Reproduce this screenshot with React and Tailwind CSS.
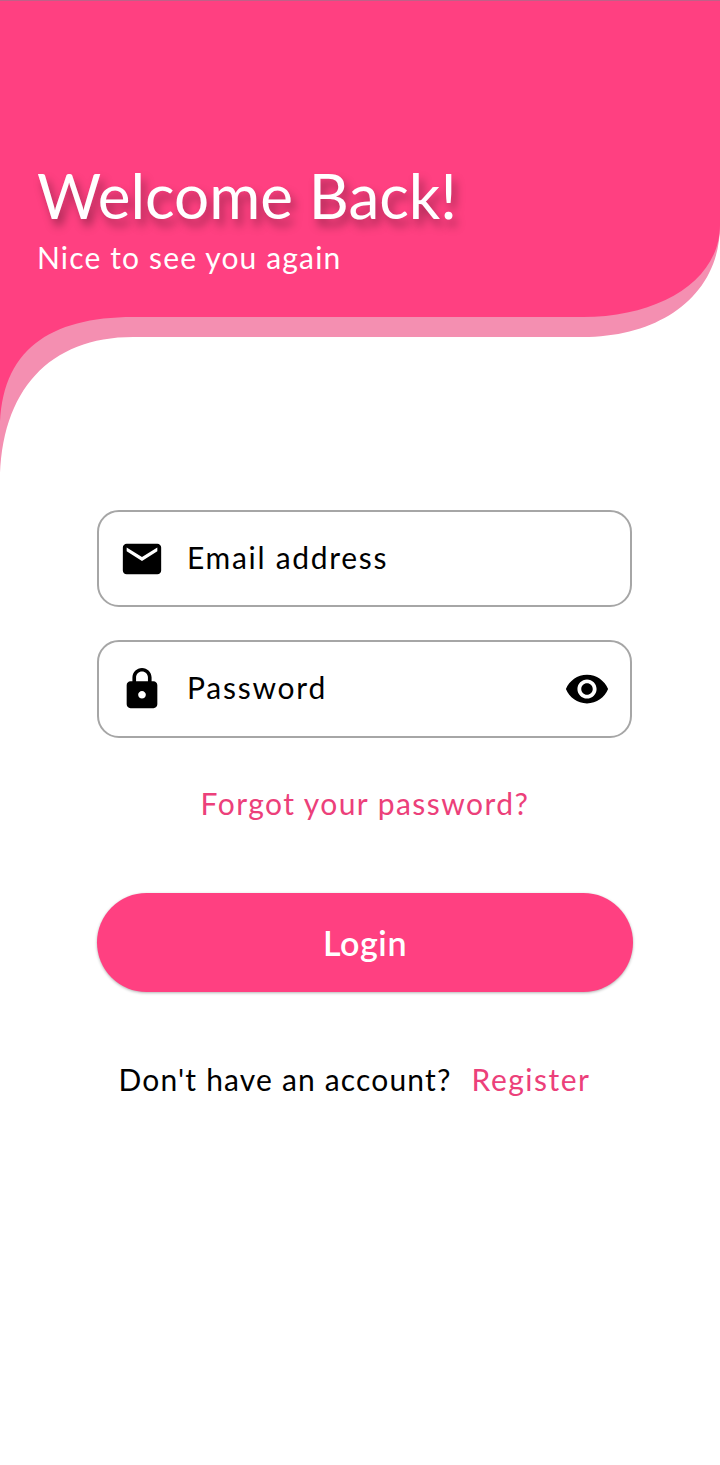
import React from 'react';
import { MdEmail, MdLock, MdVisibility } from 'react-icons/md';

// header wave: the light layer is the main shape pushed 20px down
function Wave() {
  return (
    <svg className="absolute left-0 top-0" width="720" height="500" viewBox="0 0 720 500">
      <path d="M0 0H720V225C720 296 660 337 583 337H133C50 337 0 390 0 483Z" fill="#F48FB1" />
      <path d="M0 0H720V225C720 280 660 317 583 317H133C50 317 0 350 0 430Z" fill="#FF4081" />
    </svg>
  );
}

function Field({ icon, label, boxClass, labelClass, right }) {
  return (
    <div className={`flex items-center border-2 border-[#a6a6a6] rounded-[22px] pl-[20px] pr-[20px] ${boxClass}`}>
      <span className="w-[46px] flex justify-center text-black">{icon}</span>
      <span className={`ml-[22px] pb-[3px] flex-1 text-[30px] text-black ${labelClass}`}>{label}</span>
      {right}
    </div>
  );
}

export default function App() {
  return (
    <div className="w-[720px] h-[1465px] bg-white overflow-hidden font-['Lato','Noto_Sans',sans-serif]">
      <header className="relative h-[510px]">
        <Wave />
        <div className="absolute left-0 top-0 w-full h-px bg-[#c06088]" />
        <div className="relative pt-[157px] pl-[37px] text-white">
          <h1 className="text-[62px] leading-[76px] font-normal [text-shadow:4px_7px_10px_rgba(0,0,0,0.36)]">Welcome Back!</h1>
          <p className="mt-[2px] text-[30px] leading-[44px] tracking-[1.15px]">Nice to see you again</p>
        </div>
      </header>

      <main className="w-[536px] ml-[97px]">
        <div className="w-[535px]">
          <Field icon={<MdEmail size={46} />} label="Email address" boxClass="h-[97px]" labelClass="tracking-[1.7px]" />
          <div className="mt-[33px]">
            <Field icon={<MdLock size={46} />} label="Password" boxClass="h-[98px]" labelClass="tracking-[1.75px]" right={<MdVisibility size={46} className="text-black" />} />
          </div>
        </div>

        <p className="mt-[45px] text-center text-[30px] leading-[40px] tracking-[1.45px] text-[#EC407A]">Forgot your password?</p>

        <button className="mt-[70px] w-full h-[99px] rounded-[50px] bg-[#FF4081] text-white text-[34px] font-semibold tracking-[0.6px] shadow-[0_1px_3px_rgba(0,0,0,0.3)]">
          Login
        </button>

        <div className="mt-[67px] pr-[21px] flex justify-center gap-[20px] text-[30px] leading-[40px]">
          <span className="text-black tracking-[1.17px]">Don't have an account?</span>
          <span className="text-[#EC407A] tracking-[1.5px]">Register</span>
        </div>
      </main>
    </div>
  );
}
